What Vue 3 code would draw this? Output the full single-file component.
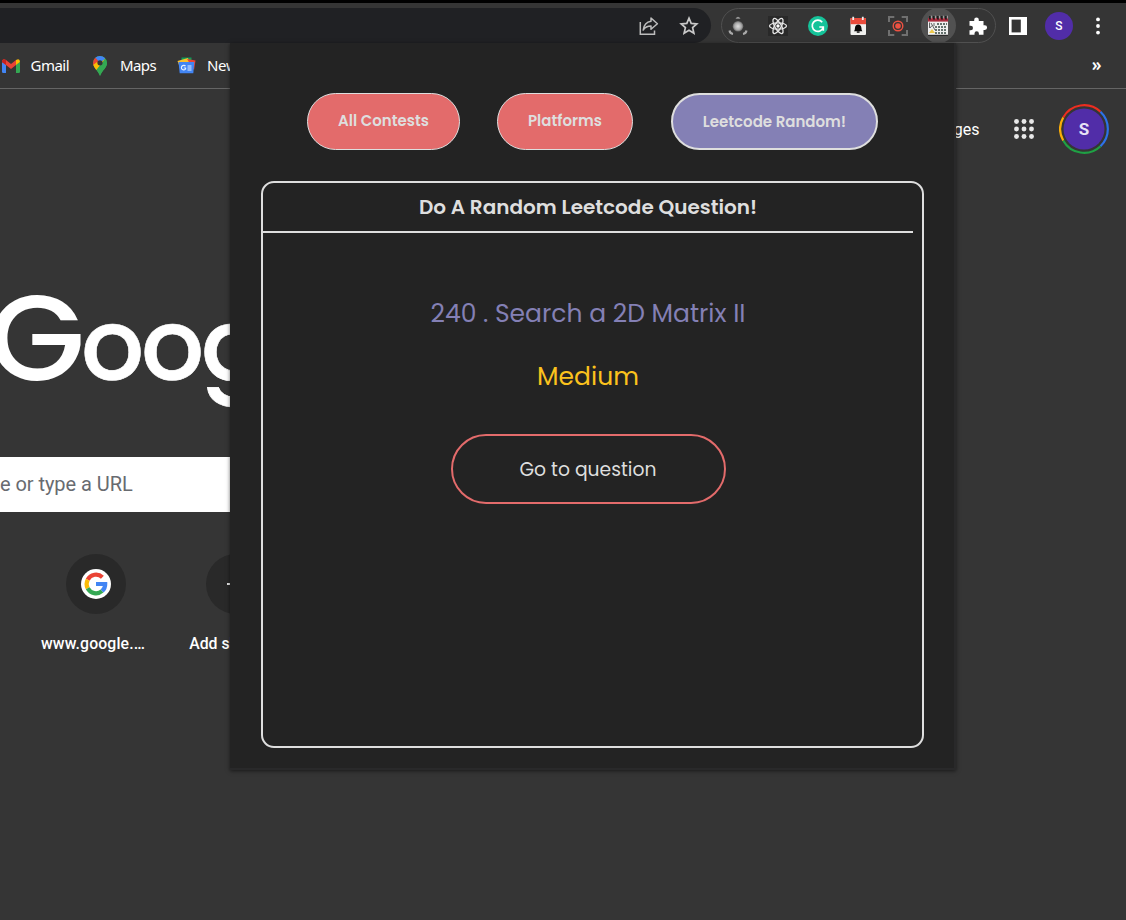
<script setup>
const tabs = [
  { label: 'All Contests', kind: 'all' },
  { label: 'Platforms', kind: 'platforms' },
  { label: 'Leetcode Random!', kind: 'random' },
]
const dots = [0, 1, 2, 3, 4, 5, 6, 7, 8]
const rings = [0, 1, 2, 3, 4]
</script>

<template>
  <div class="browser">
    <div class="top-edge"></div>
    <header class="toolbar">
      <div class="address">
        <svg class="share" width="20" height="20" viewBox="0 0 20 20" fill="none" stroke="#bdbdbd" stroke-width="1.5">
          <path d="M1.3 6V18.2H15.5V14.5" />
          <path d="M12 2L18.4 7.8L12 13.2V10.1C8.5 10.1 6 11.2 4.2 14C4.8 9.5 7.5 6 12 5.3Z" stroke-linejoin="round" />
        </svg>
        <svg width="20" height="20" viewBox="0 0 20 20" fill="none" stroke="#c9c9c9" stroke-width="1.7">
          <path d="M10 2.2L12.2 7.4L17.8 7.9L13.6 11.6L14.9 17.2L10 14.2L5.1 17.2L6.4 11.6L2.2 7.9L7.8 7.4Z" />
        </svg>
      </div>
      <div class="extensions">
        <svg width="20" height="20" viewBox="0 0 20 20">
          <defs>
            <radialGradient id="orb"><stop offset="0" stop-color="#dedede" /><stop offset=".65" stop-color="#aaa" /><stop offset="1" stop-color="#666" /></radialGradient>
          </defs>
          <circle cx="10" cy="10.3" r="5.3" fill="url(#orb)" />
          <path d="M7.5 2.8Q10 -1.2 12.5 2.8Z" fill="#999" />
          <path d="M1.5 14.5Q2 17.5 5 18M18.5 14.5Q18 17.5 15 18" fill="none" stroke="#aaa" stroke-width="2.1" />
        </svg>
        <svg width="20" height="20" viewBox="0 0 20 20" fill="none" stroke="#e6e6e6" stroke-width="1.3">
          <rect width="20" height="20" fill="#292929" stroke="none" />
          <ellipse cx="10" cy="10" rx="8.5" ry="3.2" />
          <ellipse cx="10" cy="10" rx="8.5" ry="3.2" transform="rotate(60 10 10)" />
          <ellipse cx="10" cy="10" rx="8.5" ry="3.2" transform="rotate(120 10 10)" />
          <circle cx="10" cy="10" r="1.7" fill="#fff" stroke="none" />
        </svg>
        <svg width="20" height="20" viewBox="0 0 20 20" fill="none">
          <circle cx="10" cy="10" r="10" fill="#15c39a" />
          <path d="M14.2 6.2A5.6 5.6 0 1 0 15.2 11.4M11.3 11H15.3V14.7" stroke="#fff" stroke-width="1.7" />
        </svg>
        <svg width="20" height="20" viewBox="0 0 20 20">
          <rect x="2.5" y="2" width="15.5" height="17" rx="1" fill="#f1f1ef" />
          <path d="M2.5 2H18V8.2H2.5Z" fill="#e94b3c" />
          <path d="M5.2 .8V4M14.8 .8V4" stroke="#eee" stroke-width="1.8" />
          <path d="M6 15.2Q7 14.2 7 11.8Q7.2 8.8 10.2 8.5Q13.2 8.8 13.4 11.8Q13.4 14.2 14.4 15.2ZM8.8 15.5H11.6V16.7H8.8Z" fill="#080808" />
        </svg>
        <svg width="20" height="20" viewBox="0 0 20 20" fill="none">
          <path d="M1 6V1H6.3M13.7 1H19V6M19 14V19H13.7M6.3 19H1V14" stroke="#707070" stroke-width="2" />
          <circle cx="10" cy="10" r="4.8" stroke="#ee5141" stroke-width="1.4" />
          <circle cx="10" cy="10" r="2.8" fill="#ee5141" />
        </svg>
        <span class="active-extension">
          <svg width="22" height="22" viewBox="0 0 22 22">
            <rect x="1" y="3" width="20" height="17" fill="#efefef" />
            <rect x="1" y="3" width="20" height="3.6" fill="#a92a3d" />
            <g v-for="ring in rings" :key="ring"><path :d="`M${3 + ring * 4} 1V4.5`" stroke="#161616" stroke-width="1.7" /><path :d="`M${4.3 + ring * 4} .7V3.5`" stroke="#ccc" stroke-width=".8" /></g>
            <path d="M10 9H20M8 12H20M8 15H20M8 18H20" stroke="#66736f" stroke-width="1.9" stroke-dasharray="2 1" />
            <path d="M2.5 7.5V13M4 8L8 15M3 13L5 10.5M7 8V11" stroke="#626262" />
            <path d="M2 18L5 14L8 18Z" fill="#edc94c" />
            <path d="M1 20.3H21" stroke="#222" />
          </svg>
        </span>
        <svg width="20" height="20" viewBox="0 0 20 20" fill="#fff">
          <path d="M1.5 5H6.2V3.7A2.3 2.3 0 0 1 10.8 3.7V5H15.5V9.3H16.8A2.3 2.3 0 0 1 16.8 13.9H15.5V18.7H10.9V17.4A2.2 2.2 0 0 0 6.5 17.4V18.7H1.5V14.2H2.8A2.2 2.2 0 0 0 2.8 9.8H1.5Z" />
        </svg>
      </div>
      <svg class="side-panel" width="18" height="18" viewBox="0 0 18 18"><rect width="18" height="18" fill="#fff" /><rect x="2.6" y="2.6" width="9.2" height="12.8" fill="#353535" /></svg>
      <span class="profile-small">S</span>
      <svg class="menu" width="6" height="18" viewBox="0 0 6 18" fill="#fff"><circle cx="3" cy="2.4" r="1.9" /><circle cx="3" cy="9" r="1.9" /><circle cx="3" cy="15.6" r="1.9" /></svg>
    </header>

    <nav class="bookmarks">
      <svg class="mail" width="18" height="14" viewBox="0 0 18 14">
        <path d="M0 3L4 5.5V14H1.2Q0 14 0 12.8Z" fill="#4285f4" /><path d="M14 5.5L18 3V12.8Q18 14 16.8 14H14Z" fill="#34a853" />
        <path d="M0 3Q0-1.2 4 .9L9 5L14 .9V6L9 10L4 6L0 3Z" fill="#ea4335" /><path d="M0 3Q0-1.2 4 .9V6Z" fill="#c5221f" /><path d="M14 .9Q18-1.2 18 3L14 6Z" fill="#fbbc04" />
      </svg>
      <span class="gmail">Gmail</span>
      <svg class="pin" width="14" height="20" viewBox="0 0 14 20">
        <defs><clipPath id="pin"><path d="M7 0A7 7 0 0 1 14 7C14 12 9 14 7 20C5 14 0 12 0 7A7 7 0 0 1 7 0Z" /></clipPath></defs>
        <g clip-path="url(#pin)"><path d="M0 0H14V20H0Z" fill="#34a853" /><path d="M0 0H14L11.5 3L7 7L3 3Z" fill="#4285f4" /><path d="M0 3L2.3 1.4L7 7L2 12L0 9Z" fill="#ea4335" /><path d="M0 9L4 6L7 7L12 3L2.6 15Z" fill="#fbbc04" /><path d="M14 2L7 10L2 16L7 20H14Z" fill="#34a853" /></g>
        <circle cx="7" cy="6.8" r="2.6" fill="#353535" />
      </svg>
      <span class="maps">Maps</span>
      <svg class="news-icon" width="19" height="17" viewBox="0 0 19 17">
        <path d="M4.5 .5H14.5V7H4.5Z" fill="#0f9d58" /><path d="M.5 4L11 1L13 8H2Z" fill="#fbc02d" /><path d="M10 2L18.5 3.5L17 13Z" fill="#ea4335" /><path d="M1.5 5H17.3L16.3 16.3H2.7Z" fill="#4285f4" />
        <path d="M8.5 9.2A2.3 2.3 0 1 0 8.6 12V11H6.8M10.5 9H14.5M10.5 11H14.5M10.5 13H14.5" fill="none" stroke="#e8f1ff" stroke-width="1.2" />
      </svg>
      <span class="news">News</span>
      <span class="overflow">»</span>
    </nav>

    <main class="newtab">
      <div class="account">
        <span class="images">Images</span>
        <svg class="apps" width="20" height="20" viewBox="0 0 20 20" fill="#e8e8e8"><circle v-for="dot in dots" :key="dot" :cx="2.5 + (dot % 3) * 7.5" :cy="2.5 + Math.floor(dot / 3) * 7.5" r="2.45" /></svg>
        <svg class="avatar" width="50" height="50" viewBox="0 0 50 50">
          <g fill="none" stroke-width="2.2"><path d="M4.2 13.5A23.8 23.8 0 0 1 41.5 7.8" stroke="#ed2d20" /><path d="M41.5 7.8A23.8 23.8 0 0 1 41.5 42.2" stroke="#2d72e8" /><path d="M41.5 42.2A23.8 23.8 0 0 1 4.2 36.5" stroke="#1fa044" /><path d="M4.2 36.5A23.8 23.8 0 0 1 4.2 13.5" stroke="#fbad08" /></g>
          <circle cx="25" cy="25" r="20.5" fill="#512da8" />
          <text x="25" y="31" text-anchor="middle" class="avatar-letter">S</text>
        </svg>
      </div>
      <svg class="brand" width="260" height="130" viewBox="0 0 260 130" fill="#fff">
        <text class="brand-g" transform="translate(-12 95) scale(1.03 1)">G</text>
        <text class="brand-o" transform="translate(81 95)">o</text>
        <text class="brand-o" transform="translate(141 95)">o</text>
        <text class="brand-o" transform="translate(201 95)">g</text>
      </svg>
      <div class="search">e or type a URL</div>
      <div class="shortcuts">
        <div class="shortcut">
          <span class="tile"><svg width="30" height="30" viewBox="0 0 30 30" fill="none"><circle cx="15" cy="15" r="15" fill="#fff" /><g stroke-width="4.2"><path d="M6.7 10.7A9.3 9.3 0 0 1 21.4 8.2" stroke="#ea4335" /><path d="M6.7 19.3A9.3 9.3 0 0 1 6.7 10.7" stroke="#fbbc05" /><path d="M6.7 19.3A9.3 9.3 0 0 0 21.1 22" stroke="#34a853" /><path d="M21.1 22A9 9 0 0 0 24.2 15H15" stroke="#4285f4" /></g></svg></span>
          <span class="site">www.google.…</span>
        </div>
        <div class="shortcut">
          <span class="tile"><svg width="18" height="18" viewBox="0 0 18 18" stroke="#e7e7e7" stroke-width="2"><path d="M0 9H18M9 0V18" /></svg></span>
          <span class="add">Add shortcut</span>
        </div>
      </div>
    </main>

    <section class="popup">
      <div class="tabs"><button v-for="tab in tabs" :key="tab.kind" :class="['tab', tab.kind]">{{ tab.label }}</button></div>
      <article class="card">
        <h1>Do A Random Leetcode Question!</h1>
        <div class="question">240 . Search a 2D Matrix II</div>
        <div class="level">Medium</div>
        <button class="go">Go to question</button>
      </article>
    </section>
  </div>
</template>

<style>
body { margin: 0; overflow: hidden; background: #353535; }
</style>

<style scoped>
* { box-sizing: border-box; }
.browser { position: relative; width: 1126px; height: 920px; overflow: hidden; background: #353535; color: #fff; font-family: Roboto, sans-serif; }
svg { display: block; flex: none; }
.top-edge { height: 3px; background: #000; }
.toolbar { height: 40px; display: flex; align-items: center; padding-top: 5px; }
.address { width: 711px; height: 35px; border-radius: 0 18px 18px 0; background: #202124; display: flex; align-items: center; justify-content: flex-end; gap: 20px; padding-right: 12px; }
.extensions { width: 275px; height: 35px; margin-left: 10px; border: 1px solid #505050; border-radius: 18px; display: flex; align-items: center; gap: 20px; padding-left: 6.4px; }
.active-extension { width: 35px; height: 35px; margin: 0 -7.5px; border-radius: 50%; background: #515151; display: grid; place-items: center; }
.side-panel { margin-left: 13px; }
.profile-small { width: 28px; height: 28px; margin-left: 18px; border-radius: 50%; background: #512da8; display: grid; place-items: center; font: 500 12px Roboto, sans-serif; }
.menu { margin-left: 22px; }
.bookmarks { height: 46px; border-bottom: 1px solid #656565; display: flex; align-items: center; font: 15px/20px "Noto Sans", sans-serif; }
.bookmarks span { padding-bottom: 2px; }
.mail { margin-left: 2px; }
.gmail { width: 39px; margin-left: 10.5px; letter-spacing: -.5px; }
.pin { margin-left: 23.5px; }
.maps { width: 37px; margin-left: 13px; letter-spacing: -.6px; }
.news-icon { margin-left: 20px; }
.news { margin-left: 11px; letter-spacing: -.3px; }
.overflow { margin-left: auto; margin-right: 24.5px; font-size: 17px; font-weight: 600; }
.newtab { height: 831px; }
.account { height: 80px; display: flex; align-items: center; justify-content: flex-end; padding-right: 17px; font-size: 16px; }
.apps { margin-left: 34.5px; }
.avatar { margin-left: 25px; }
.avatar-letter { font: 700 17px Roboto, sans-serif; fill: #e7e2f5; }
.brand { margin-top: 116px; }
.brand-g { font: 500 122px Poppins, Inter, sans-serif; }
.brand-o { font: 500 99px Poppins, Inter, sans-serif; stroke: #fff; stroke-width: .6px; }
.search { width: 240px; height: 55px; margin-top: 42px; background: #fff; color: #686b70; font-size: 20px; line-height: 55px; letter-spacing: -.05px; }
.shortcuts { display: flex; gap: 28px; margin-top: 42px; padding-left: 40px; }
.shortcut { width: 112px; display: flex; flex-direction: column; align-items: center; font: 500 15.8px/20px Roboto, sans-serif; }
.site { margin-left: -6px; letter-spacing: .12px; }
.add { margin-left: -2px; }
.tile { width: 60px; height: 60px; border-radius: 50%; background: #292929; display: grid; place-items: center; margin-bottom: 20px; }
.popup { position: absolute; left: 230px; top: 43px; width: 726px; height: 727px; background: #232323; box-shadow: 0 1px 4px rgba(0,0,0,.55); border-right: 2px solid #29292a; border-bottom: 2px solid #29292a; padding: 50px 31px 0; font-family: Poppins, Inter, sans-serif; color: #dedede; }
.tabs { display: flex; padding-left: 46px; }
.tab { height: 57px; padding: 0 0 2px; border: 1px solid #dedede; border-radius: 29px; background: #e36b6b; color: #dedede; font: 600 15px/22px Poppins, Inter, sans-serif; white-space: nowrap; }
.all { width: 153px; }
.platforms { width: 136px; margin-left: 37px; }
.random { width: 207px; margin-left: 38px; border-width: 2px; background: #8480b5; padding: 0; }
.card { width: 663px; height: 567px; margin-top: 31px; border: 2px solid #dedede; border-radius: 13px; display: flex; flex-direction: column; align-items: center; padding-right: 9px; }
h1 { width: 100%; height: 50px; margin: 0; border-bottom: 2px solid #dedede; font-size: 20px; line-height: 49px; font-weight: 600; text-align: center; }
.question { margin-top: 62px; color: #8480b5; font-size: 25px; line-height: 38px; }
.level { margin-top: 25px; color: #fbc21d; font-size: 25px; line-height: 38px; }
.go { width: 275px; height: 70px; margin-top: 38px; padding: 2px 0 0; border: 2px solid #e36b6b; border-radius: 35px; background: transparent; color: #dedede; font: 400 18.75px/28px Poppins, Inter, sans-serif; }
</style>
